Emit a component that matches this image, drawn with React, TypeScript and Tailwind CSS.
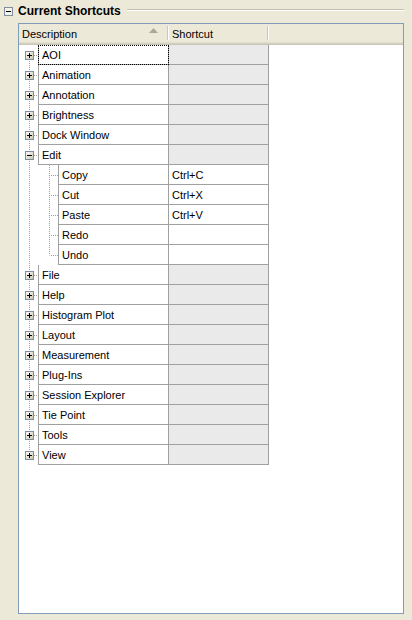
import { FC } from 'react'

type Row = { name: string; shortcut?: string; child?: boolean; expanded?: boolean }

const rows: Row[] = [
  { name: 'AOI' },
  { name: 'Animation' },
  { name: 'Annotation' },
  { name: 'Brightness' },
  { name: 'Dock Window' },
  { name: 'Edit', expanded: true },
  { name: 'Copy', shortcut: 'Ctrl+C', child: true },
  { name: 'Cut', shortcut: 'Ctrl+X', child: true },
  { name: 'Paste', shortcut: 'Ctrl+V', child: true },
  { name: 'Redo', child: true },
  { name: 'Undo', child: true },
  { name: 'File' },
  { name: 'Help' },
  { name: 'Histogram Plot' },
  { name: 'Layout' },
  { name: 'Measurement' },
  { name: 'Plug-Ins' },
  { name: 'Session Explorer' },
  { name: 'Tie Point' },
  { name: 'Tools' },
  { name: 'View' },
]

const dot = '#a0a0a0'

const ExpandBox: FC<{ x: number; y: number; open?: boolean }> = ({ x, y, open }) => (
  <g>
    <defs>
      <linearGradient id="xpbox" x1="0" y1="0" x2="1" y2="1">
        <stop offset="0" stopColor="#ffffff" />
        <stop offset="1" stopColor="#c8c2ad" />
      </linearGradient>
    </defs>
    <rect x={x + 0.5} y={y + 0.5} width={8} height={8} fill="url(#xpbox)" stroke="#7f8e9d" />
    <line x1={x + 2} y1={y + 4.5} x2={x + 7} y2={y + 4.5} stroke="#000" />
    {!open && <line x1={x + 4.5} y1={y + 2} x2={x + 4.5} y2={y + 7} stroke="#000" />}
  </g>
)

const Gutter: FC<{ row: Row; first: boolean; last: boolean; lastChild: boolean }> = ({
  row,
  first,
  last,
  lastChild,
}) => {
  const w = row.child ? 39 : 19
  return (
    <svg width={w} height={20} className="shrink-0 block">
      <line
        x1={10.5}
        y1={first ? 14 : 0}
        x2={10.5}
        y2={last ? 6 : 20}
        stroke={dot}
        strokeDasharray="1 1"
      />
      {row.child ? (
        <>
          <line x1={30.5} y1={0} x2={30.5} y2={lastChild ? 10.5 : 20} stroke={dot} strokeDasharray="1 1" />
          <line x1={32} y1={10.5} x2={39} y2={10.5} stroke={dot} strokeDasharray="1 1" />
        </>
      ) : (
        <>
          <line x1={15} y1={10.5} x2={19} y2={10.5} stroke={dot} strokeDasharray="1 1" />
          <ExpandBox x={6} y={6} open={row.expanded} />
        </>
      )}
    </svg>
  )
}

export default function App() {
  return (
    <div
      className="w-[412px] h-[620px] bg-[#ece9d8] flex flex-col text-[11px] text-black"
      style={{ fontFamily: '"Liberation Sans", Arial, sans-serif' }}
    >
      <div className="flex items-center h-[23px] pl-[4px] pr-[8px] shrink-0">
        <svg width={9} height={9} className="shrink-0 block -mt-[1px]">
          <rect x={0.5} y={0.5} width={8} height={8} fill="#f4f2ea" stroke="#7f8e9d" />
          <line x1={2} y1={4.5} x2={7} y2={4.5} stroke="#000" />
        </svg>
        <span className="ml-[5px] font-bold text-[12px] leading-none -mt-[1px]">Current Shortcuts</span>
        <div className="flex-1 ml-[6px] flex flex-col -mt-[4px]">
          <div className="h-px bg-[#c5c2b2]" />
          <div className="h-px bg-white" />
        </div>
      </div>

      <div className="ml-[18px] mr-[8px] mb-[6px] flex-1 border border-[#7f9db9] bg-white flex flex-col">
        <div className="flex flex-col shrink-0">
          <div className="flex h-[18px] bg-[#ece9d8] items-center">
            <div className="w-[148px] relative flex items-center pl-[3px] pt-[3px]">
              Description
              <svg width={9} height={5} className="absolute left-[130px] top-[5px]">
                <polygon points="0,5 4.5,0 9,5" fill="#aca899" />
              </svg>
            </div>
            <div className="w-px h-[14px] bg-[#cbc7b8]" />
            <div className="w-px h-[14px] bg-white" />
            <div className="w-[98px] pl-[3px] pt-[3px]">Shortcut</div>
            <div className="w-px h-[14px] bg-[#cbc7b8]" />
            <div className="w-px h-[14px] bg-white" />
            <div className="flex-1" />
          </div>
          <div className="h-px bg-[#e2decd]" />
          <div className="h-px bg-[#d6d2c2]" />
          <div className="h-px bg-[#cbc7b8]" />
        </div>

        <div className="flex flex-col">
          {rows.map((r, i) => {
            const lastTop = rows.length - 1
            const next = rows[i + 1]
            const lastChild = !!r.child && (!next || !next.child)
            return (
              <div key={r.name} className="flex h-[20px]">
                <Gutter row={r} first={i === 0} last={i === lastTop} lastChild={lastChild} />
                <div
                  className={`${r.child ? 'w-[111px]' : 'w-[131px]'} border-l border-r border-b border-[#a0a0a0] flex items-center pl-[3px] pt-[2px] ${
                    i === 0 ? 'outline outline-1 outline-dotted outline-black -outline-offset-1' : ''
                  }`}
                >
                  {r.name}
                </div>
                <div
                  className={`w-[100px] border-r border-b border-[#a0a0a0] flex items-center pl-[3px] pt-[2px] ${
                    r.child ? 'bg-white' : 'bg-[#eaeaea]'
                  }`}
                >
                  {r.shortcut}
                </div>
              </div>
            )
          })}
        </div>
      </div>
    </div>
  )
}
